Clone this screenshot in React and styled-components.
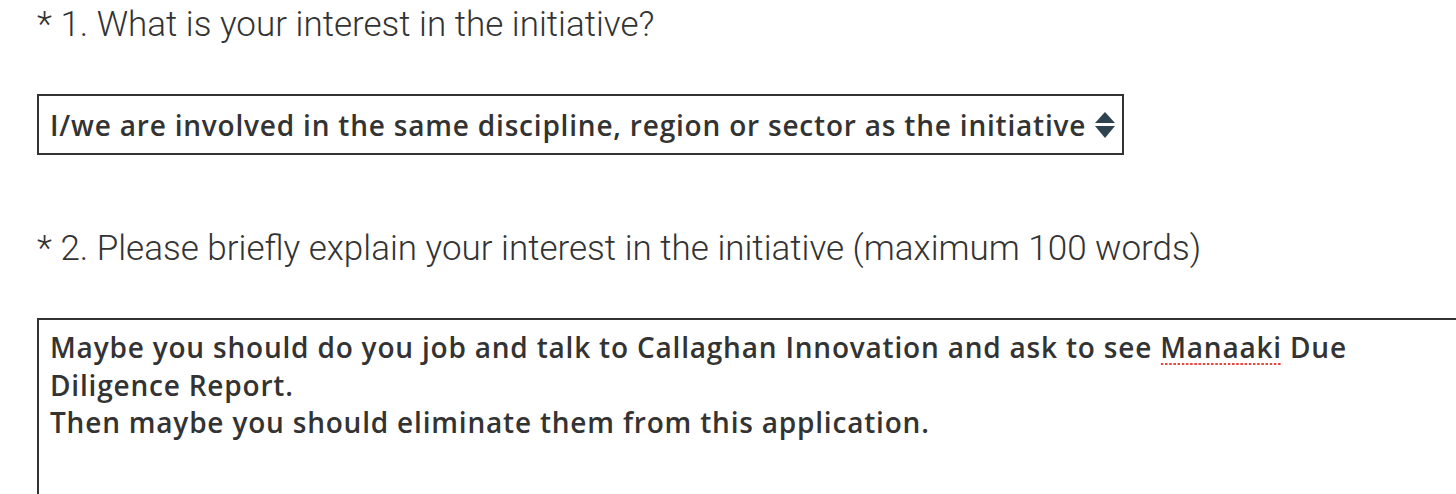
import React from 'react';
import styled, { createGlobalStyle } from 'styled-components';

const Global = createGlobalStyle`
  html, body {
    margin: 0;
    padding: 0;
    background: #fff;
    overflow: hidden;
  }
`

const Page = styled.div`
  padding: 3px 0 0 37px;
  height: 494px;
  box-sizing: border-box;
  overflow: hidden;
`

const Question = styled.div`
  font-family: Roboto, "Liberation Sans", sans-serif;
  font-weight: 300;
  font-size: 35px;
  line-height: 44px;
  color: #333;
  white-space: nowrap;
  margin-bottom: ${props => props.gap}px;
`

const SelectBox = styled.div`
  width: 1072px;
  height: 57px;
  border: 2px solid #333;
  display: flex;
  align-items: center;
  padding-left: 11px;
  box-sizing: content-box;
  margin-bottom: 72px;
`

const Answer = styled.span`
  font-family: "Open Sans", "Liberation Sans", sans-serif;
  font-weight: 600;
  font-size: 28px;
  color: #333;
  letter-spacing: 0.8px;
  white-space: nowrap;
`

const Arrows = styled.svg`
  margin-left: 8px;
  flex: none;
`

const TextArea = styled.div`
  width: 1500px;
  height: 200px;
  border: 2px solid #333;
  padding: 9px 11px;
  font-family: "Open Sans", "Liberation Sans", sans-serif;
  font-weight: 600;
  font-size: 28px;
  line-height: 37.5px;
  color: #333;
  letter-spacing: 0.8px;
  white-space: nowrap;
`

const Misspelt = styled.span`
  background-image: radial-gradient(circle, #e8483f 1.1px, transparent 1.4px);
  background-size: 4.2px 4px;
  background-repeat: repeat-x;
  background-position: 0 100%;
`

export default function App() {
  return (
    <Page>
      <Global />
      <Question gap={47}>* 1. What is your interest in the initiative?</Question>
      <SelectBox>
        <Answer>I/we are involved in the same discipline, region or sector as the initiative</Answer>
        <Arrows width="22" height="30" viewBox="0 0 22 30">
          <path d="M11 2 L21 13 L1 13 Z" fill="#2f4250" />
          <path d="M1 16 L21 16 L11 28 Z" fill="#2f4250" />
        </Arrows>
      </SelectBox>
      <Question gap={47}>* 2. Please briefly explain your interest in the initiative (maximum 100 words)</Question>
      <TextArea>
        Maybe you should do you job and talk to Callaghan Innovation and ask to see <Misspelt>Manaaki</Misspelt> Due
        <br />
        Diligence Report.
        <br />
        Then maybe you should eliminate them from this application.
      </TextArea>
    </Page>
  )
}
